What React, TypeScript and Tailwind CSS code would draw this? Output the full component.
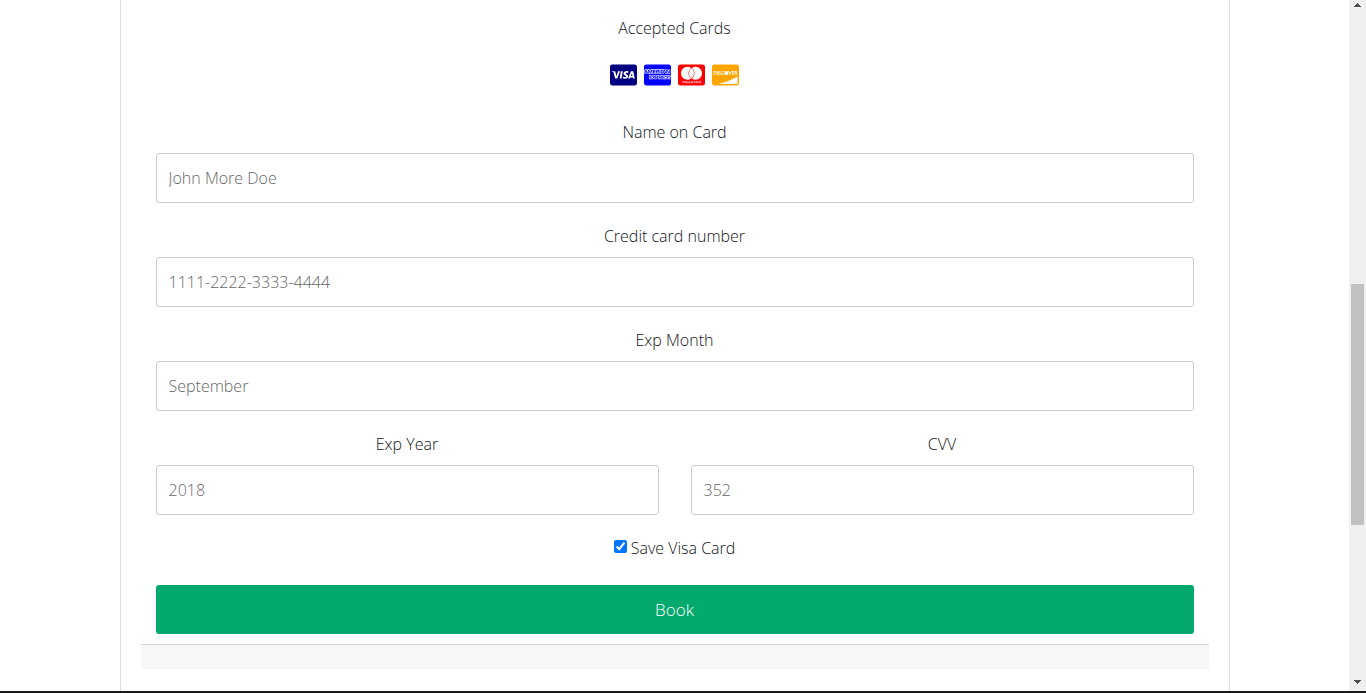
import React from "react";
import { FaCcAmex, FaCcDiscover, FaCcMastercard, FaCcVisa } from "react-icons/fa";

type FieldProps = { id: string; label: string; placeholder: string };

function Field({ id, label, placeholder }: FieldProps) {
  return (
    <div className="mb-[21px] flex-1">
      <label htmlFor={id} className="mb-[9px] block text-center">
        {label}
      </label>
      <input
        id={id}
        type="text"
        placeholder={placeholder}
        className="block h-[50px] w-full rounded-[3px] border border-[#ccc] bg-white px-3 font-light text-[#111418] placeholder:text-[#666]"
      />
    </div>
  );
}

function ScrollBar() {
  return (
    <div aria-hidden="true" className="flex w-[17px] shrink-0 flex-col items-center bg-[#f0f0f0]">
      <svg className="h-[17px] w-[17px] shrink-0" viewBox="0 0 17 17" fill="#505050" shapeRendering="crispEdges">
        <path d="M8 3h1v1h1v1h1v1h1v1H5V6h1V5h1V4h1z" />
      </svg>
      <div className="flex-[267]" />
      <div className="w-[13px] flex-[241] bg-[#c1c1c1]" />
      <div className="flex-[149]" />
      <svg className="h-[17px] w-[17px] shrink-0" viewBox="0 0 17 17" fill="#505050" shapeRendering="crispEdges">
        <path d="M5 6h7v1h-1v1h-1v1H9v1H8V9H7V8H6V7H5z" />
      </svg>
    </div>
  );
}

export default function App() {
  return (
    <div className="flex h-screen flex-col overflow-hidden bg-white font-['Open_Sans','Noto_Sans',sans-serif] text-base font-light text-[#111418]">
      <div className="flex min-h-0 flex-1">
        <main className="flex min-w-0 flex-1 justify-center">
          <div className="w-full max-w-[1110px] border-x border-[#dedede] px-5">
            <form className="px-[15px] pt-4 pb-2.5" onSubmit={(e) => e.preventDefault()}>
              <p className="text-center">Accepted Cards</p>
              <div className="mt-[23px] mb-[33px] flex justify-center gap-[7px]">
                <FaCcVisa className="h-6 w-[27px] text-[#000080]" title="Visa" />
                <FaCcAmex className="h-6 w-[27px] text-[#0000ff]" title="American Express" />
                <FaCcMastercard className="h-6 w-[27px] text-[#ff0000]" title="Mastercard" />
                <FaCcDiscover className="h-6 w-[27px] text-[#ffa500]" title="Discover" />
              </div>
              <Field id="cname" label="Name on Card" placeholder="John More Doe" />
              <Field id="ccnum" label="Credit card number" placeholder="1111-2222-3333-4444" />
              <Field id="expmonth" label="Exp Month" placeholder="September" />
              <div className="flex gap-8">
                <Field id="expyear" label="Exp Year" placeholder="2018" />
                <Field id="cvv" label="CVV" placeholder="352" />
              </div>
              <label className="flex items-start justify-center gap-1">
                <input type="checkbox" defaultChecked className="mt-1 h-[13px] w-[13px]" />
                Save Visa Card
              </label>
              <button type="submit" className="mt-[25px] block h-[49px] w-full rounded-[3px] bg-[#04aa6d] text-[17px] text-white">
                Book
              </button>
            </form>
            <div className="h-[25px] rounded-b-[3px] border-t border-[#d5d5d5] bg-[#f7f7f7]" />
          </div>
        </main>
        <ScrollBar />
      </div>
      <div className="h-0.5 shrink-0 bg-[#1b191b]" />
    </div>
  );
}
